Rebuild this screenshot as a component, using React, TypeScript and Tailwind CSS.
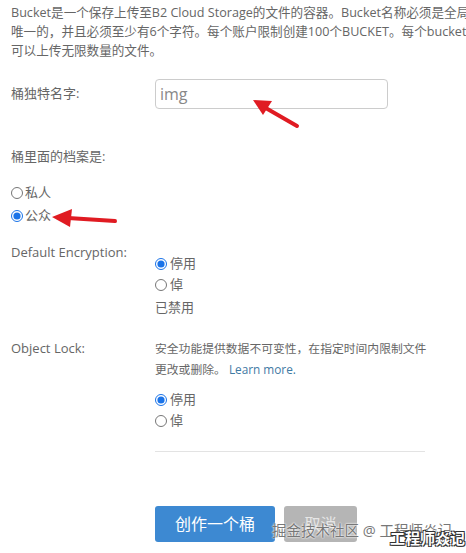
import React from 'react'

const FONT = { fontFamily: '"Open Sans", "Noto Sans CJK SC", sans-serif' }

function Radio({ label, checked }: { label: string; checked?: boolean }) {
  return (
    <label className="flex items-center gap-[3px] h-[21px]">
      <input
        type="radio"
        defaultChecked={checked}
        className="w-[12px] h-[12px] m-0 accent-[#1a73e8]"
      />
      <span>{label}</span>
    </label>
  )
}

export default function App() {
  return (
    <div className="relative w-[466px] h-[553px] bg-white text-[13px] text-[#666] overflow-hidden" style={FONT}>
      <div className="pl-[11px] pt-[3px]">
        {/* 说明文字 */}
        <p className="leading-[19px] whitespace-nowrap text-[12.6px]">
          Bucket是一个保存上传至B2 Cloud Storage的文件的容器。Bucket名称必须是全局
          <br />
          唯一的，并且必须至少有6个字符。每个账户限制创建100个BUCKET。每个bucket
          <br />
          可以上传无限数量的文件。
        </p>

        <div className="flex items-center mt-[19px]">
          <div className="w-[144px]">桶独特名字:</div>
          <input
            defaultValue="img"
            className="w-[233px] h-[30px] px-[4px] border border-[#ccc] rounded-[4px] text-[16px] text-[#888] outline-none"
          />
        </div>

        <div className="mt-[38px] leading-[19px]">桶里面的档案是:</div>
        <div className="mt-[15px]">
          <label className="flex items-center gap-[2px] h-[23px]">
            <input type="radio" name="vis" className="w-[12px] h-[12px] m-0 accent-[#1a73e8]" />
            <span>私人</span>
          </label>
          <label className="flex items-center gap-[2px] h-[23px]">
            <input type="radio" name="vis" defaultChecked className="w-[12px] h-[12px] m-0 accent-[#1a73e8]" />
            <span>公众</span>
          </label>
        </div>

        <div className="flex mt-[16px]">
          <div className="w-[144px] leading-[19px]">Default Encryption:</div>
          <div className="pt-[10px]">
            <div>
              <Radio label="停用" checked />
              <Radio label="倬" />
            </div>
            <div className="mt-[2px] leading-[21px]">已禁用</div>
          </div>
        </div>

        <div className="flex mt-[20px]">
          <div className="w-[144px] leading-[21px]">Object Lock:</div>
          <div className="w-[290px]">
            <p className="w-[276px] leading-[21px] text-[11.8px]">
              安全功能提供数据不可变性，在指定时间内限制文件更改或删除。{' '}
              <span className="text-[#3f7aa3]">Learn more.</span>
            </p>
            <div className="mt-[9px]">
              <Radio label="停用" checked />
              <Radio label="倬" />
            </div>
            <div className="mt-[20px] w-[270px] h-px bg-[#e3e3e3]" />
          </div>
        </div>

        <div className="flex mt-[54px] pl-[144px] gap-[9px]">
          <button className="w-[120px] h-[36px] rounded-[3px] bg-[#3d89d2] text-white text-[16px]">
            创作一个桶
          </button>
          <button className="w-[73px] h-[36px] rounded-[3px] bg-[#b5b5b5] text-[#e6e6e6] text-[16px]">
            取消
          </button>
        </div>
      </div>

      {/* 红色箭头 */}
      <svg className="absolute inset-0 pointer-events-none" width="466" height="553">
        <line x1="297" y1="126" x2="264" y2="107" stroke="#e01b22" strokeWidth="4" strokeLinecap="round" />
        <polygon points="253,100 272,101 263,115" fill="#e01b22" />
        <line x1="115" y1="221" x2="68" y2="218" stroke="#e01b22" strokeWidth="4" strokeLinecap="round" />
        <polygon points="52,217 72,209 70,227" fill="#e01b22" />
      </svg>

      {/* 水印 */}
      <div
        className="absolute left-[272px] top-[520px] text-[14.5px] text-[#777] whitespace-nowrap"
        style={{ textShadow: '0 0 2px #fff, 0 0 2px #fff' }}
      >
        掘金技术社区 @ 工程师焱记
      </div>
      <div
        className="absolute left-[390px] top-[527px] text-[15px] font-bold text-white whitespace-nowrap"
        style={{ textShadow: '1px 1px 0 #333, -1px -1px 0 #333, 1px -1px 0 #333, -1px 1px 0 #333' }}
      >
        工程师焱记
      </div>
    </div>
  )
}
